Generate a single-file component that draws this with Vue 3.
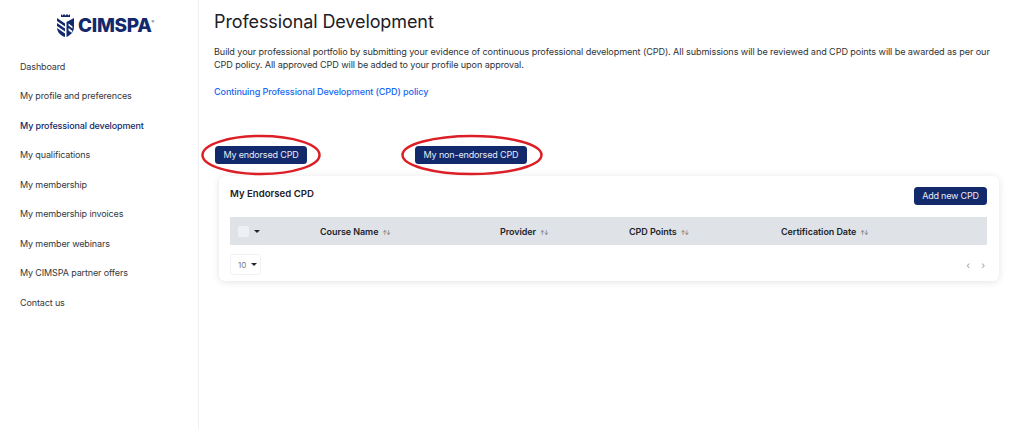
<script setup>
const nav = ['Dashboard','My profile and preferences','My professional development','My qualifications','My membership','My membership invoices','My member webinars','My CIMSPA partner offers','Contact us']
const cols = [
  { name: 'Course Name', w: 180 },
  { name: 'Provider', w: 129 },
  { name: 'CPD Points', w: 152 },
  { name: 'Certification Date', w: 206 },
]
</script>

<template>
  <div class="page">
    <aside class="side">
      <div class="logo">
        <svg class="shield" width="17" height="24" viewBox="0 0 17 24">
          <path d="M4 0l1.500 1.500L7 0l1.500 1.500L10 0l1.500 1.500L13 0v3H4z" fill="#12296b"/>
          <path d="M0 4l8 5.500V12.500L0 7zM0 9l8 5.500v3L0 12zM0 14l8 5.500V23C4 21.500 .5 19 0 14z" fill="#12296b"/>
          <path d="M17 4v9c0 5-3.500 8-7.500 10V8z" fill="#12296b"/>
          <path d="M11.500 9.500l4 3v2l-4-3zM11.500 14l4 3-.8 1.800-3.200-2.400z" fill="#fff"/>
        </svg>
        <span class="brand">CIMSPA</span><sup class="reg">®</sup>
      </div>
      <nav class="nav">
        <a v-for="(n,i) in nav" :key="n" class="nav-item" :class="{ active: i===2 }">{{ n }}</a>
      </nav>
    </aside>
    <main class="main">
      <h1 class="title">Professional Development</h1>
      <p class="intro">Build your professional portfolio by submitting your evidence of continuous professional development (CPD). All submissions will be reviewed and CPD points will be awarded as per our CPD policy. All approved CPD will be added to your profile upon approval.</p>
      <a class="policy">Continuing Professional Development (CPD) policy</a>
      <div class="tabs">
        <button class="btn tab-a">My endorsed CPD</button>
        <button class="btn tab-b">My non-endorsed CPD</button>
        <svg class="rings" width="360" height="48" viewBox="0 0 360 48">
          <ellipse cx="60" cy="24" rx="58.500" ry="19" />
          <ellipse cx="271" cy="24" rx="69.500" ry="19" />
        </svg>
      </div>
      <section class="card">
        <div class="card-head">
          <h2 class="card-title">My Endorsed CPD</h2>
          <button class="btn add">Add new CPD</button>
        </div>
        <div class="thead">
          <div class="check-col">
            <span class="check"></span>
            <span class="caret"></span>
          </div>
          <div v-for="c in cols" :key="c.name" class="th" :style="{ width: c.w + 'px' }">
            {{ c.name }}<span class="sort">↑↓</span>
          </div>
        </div>
        <div class="foot">
          <div class="size">10<span class="caret"></span></div>
          <div class="pager"><span>‹</span><span>›</span></div>
        </div>
      </section>
    </main>
  </div>
</template>

<style>
html, body { margin: 0; background: #fff; }
</style>

<style scoped>
.page {
  display: flex;
  width: 1024px;
  height: 429px;
  overflow: hidden;
  font-family: Inter, "Open Sans", sans-serif;
  color: #22252a;
  background: #fff;
}
.side {
  width: 199px;
  flex: none;
  box-sizing: border-box;
  border-right: 1px solid #eef0f3;
  height: 429px;
}
.logo {
  display: flex;
  align-items: center;
  height: 24px;
  margin-top: 14px;
  padding-left: 57px;
  color: #12296b;
}
.shield { flex: none; margin-right: 4px; }
.brand {
  font-family: Inter, sans-serif;
  font-weight: 800;
  font-size: 19px;
  letter-spacing: -.3px;
  line-height: 24px;
}
.reg { font-size: 4px; line-height: 1; align-self: flex-start; margin-top: 6px; }
.nav { display: flex; flex-direction: column; margin-top: 13.500px; padding-left: 20px; }
.nav-item {
  height: 29.500px;
  line-height: 29.500px;
  font-size: 9px;
  letter-spacing: -.13px;
  color: #33373d;
  font-weight: 400;
}
.nav-item.active { color: #12296b; font-weight: 500; }
.main { flex: 1; min-width: 0; padding-left: 15px; padding-right: 25px; }
.title {
  margin: 10px 0 0;
  font-size: 18px;
  line-height: 24px;
  font-weight: 400;
  letter-spacing: -.1px;
  color: #1d2025;
}
.intro {
  margin: 11px 0 0;
  font-size: 9.100px;
  line-height: 13px;
  color: #2f3338;
  font-weight: 400;
  width: 785px;
  letter-spacing: -.09px;
}
.policy {
  display: block;
  margin-top: 14px;
  font-size: 9.100px;
  line-height: 13px;
  font-weight: 500;
  letter-spacing: -.12px;
  color: #1668f2;
}
.tabs {
  position: relative;
  display: flex;
  margin-top: 48px;
  padding-left: 1px;
  height: 18px;
}
.btn {
  border: 0;
  height: 18px;
  padding: 0;
  border-radius: 3.500px;
  background: #12296b;
  color: #e8ecf5;
  font: 400 9px/18px Inter, "Open Sans", sans-serif;
  letter-spacing: -.15px;
}
.tab-a { width: 92px; }
.tab-b { width: 112px; margin-left: 108px; }
.add { width: 73px; letter-spacing: -.2px; }
.rings { position: absolute; left: -13px; top: -15px; fill: none; stroke: #dc1f26; stroke-width: 2.500px; }
.card {
  margin: 12px 0 0 5px;
  width: 780px;
  height: 105px;
  box-sizing: border-box;
  padding: 11px 12px 0 11px;
  border-radius: 6px;
  background: #fff;
  box-shadow: 0 1px 7px rgba(30, 40, 60, .13);
}
.card-head { display: flex; justify-content: space-between; align-items: flex-start; height: 30px; }
.card-title { margin: 0; font-size: 9.600px; line-height: 13px; font-weight: 600; color: #1d2025; }
.thead {
  display: flex;
  align-items: center;
  width: 757px;
  height: 28px;
  background: #dfe2e7;
}
.check-col { width: 90px; flex: none; display: flex; align-items: center; padding-left: 8px; box-sizing: border-box; }
.check { width: 11px; height: 11px; border-radius: 1.500px; background: #eef0f3; margin-right: 5px; }
.caret { width: 0; height: 0; border: 3px solid transparent; border-top: 3px solid #22252a; border-bottom: 0; }
.th { flex: none; font-size: 9px; font-weight: 600; letter-spacing: -.07px; color: #22252a; white-space: nowrap; }
.sort { font-size: 5.500px; margin-left: 4px; color: #555; font-weight: 400; letter-spacing: -.8px; }
.foot { display: flex; justify-content: space-between; align-items: center; margin-top: 9px; }
.size {
  display: flex;
  align-items: center;
  gap: 5px;
  box-sizing: border-box;
  width: 31px;
  height: 21px;
  padding-left: 7px;
  border: 1px solid #f1f2f4;
  border-radius: 3px;
  font-size: 8px;
  color: #777;
}
.pager { display: flex; gap: 11px; font-size: 10px; color: #9aa0a8; padding-right: 2px; }
</style>
